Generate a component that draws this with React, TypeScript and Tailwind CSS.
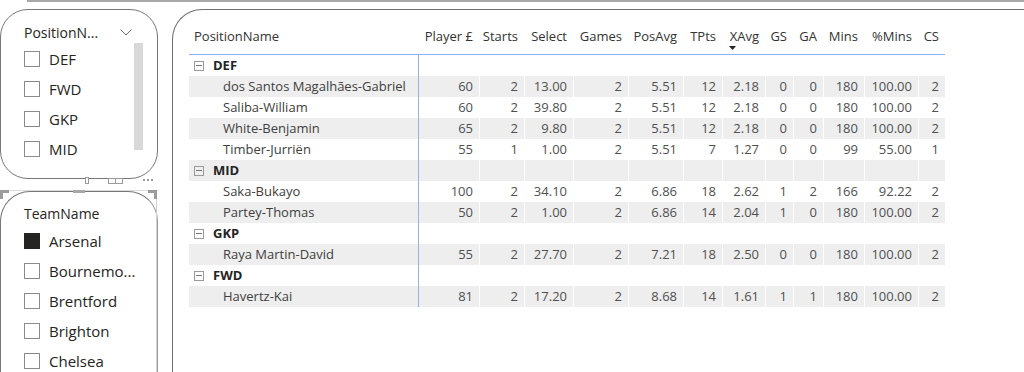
const cols = [
  { name: 'Player £', w: 'w-[60px]' },
  { name: 'Starts', w: 'w-[45px]' },
  { name: 'Select', w: 'w-[49px]' },
  { name: 'Games', w: 'w-[55px]' },
  { name: 'PosAvg', w: 'w-[55px]' },
  { name: 'TPts', w: 'w-[39px]' },
  { name: 'XAvg', w: 'w-[43px]' },
  { name: 'GS', w: 'w-[28px]' },
  { name: 'GA', w: 'w-[30px]' },
  { name: 'Mins', w: 'w-[41px]' },
  { name: '%Mins', w: 'w-[54px]' },
  { name: 'CS', w: 'w-[27px]' },
]

type Row = { group?: string; name?: string; vals?: string[] }

const groups: { pos: string; players: [string, ...string[]][] }[] = [
  {
    pos: 'DEF',
    players: [
      ['dos Santos Magalhães-Gabriel', '60', '2', '13.00', '2', '5.51', '12', '2.18', '0', '0', '180', '100.00', '2'],
      ['Saliba-William', '60', '2', '39.80', '2', '5.51', '12', '2.18', '0', '0', '180', '100.00', '2'],
      ['White-Benjamin', '65', '2', '9.80', '2', '5.51', '12', '2.18', '0', '0', '180', '100.00', '2'],
      ['Timber-Jurriën', '55', '1', '1.00', '2', '5.51', '7', '1.27', '0', '0', '99', '55.00', '1'],
    ],
  },
  {
    pos: 'MID',
    players: [
      ['Saka-Bukayo', '100', '2', '34.10', '2', '6.86', '18', '2.62', '1', '2', '166', '92.22', '2'],
      ['Partey-Thomas', '50', '2', '1.00', '2', '6.86', '14', '2.04', '1', '0', '180', '100.00', '2'],
    ],
  },
  {
    pos: 'GKP',
    players: [['Raya Martin-David', '55', '2', '27.70', '2', '7.21', '18', '2.50', '0', '0', '180', '100.00', '2']],
  },
  {
    pos: 'FWD',
    players: [['Havertz-Kai', '81', '2', '17.20', '2', '8.68', '14', '1.61', '1', '1', '180', '100.00', '2']],
  },
]

const rows: Row[] = groups.flatMap((g) => [
  { group: g.pos },
  ...g.players.map(([name, ...vals]) => ({ name, vals })),
])

function Checkbox({ checked }: { checked?: boolean }) {
  return (
    <span
      className={
        checked
          ? 'w-[16px] h-[16px] shrink-0 bg-[#252423] border border-[#252423]'
          : 'w-[16px] h-[16px] shrink-0 bg-white border border-[#8a8a8a]'
      }
    />
  )
}

function SlicerItem({ label, checked }: { label: string; checked?: boolean }) {
  return (
    <div className="h-[30px] flex items-center gap-[9px] text-[15px] text-[#252423]">
      <Checkbox checked={checked} />
      <span className="whitespace-nowrap">{label}</span>
    </div>
  )
}

export default function App() {
  return (
    <div className="relative w-[1024px] h-[372px] overflow-hidden bg-white font-['Open_Sans',sans-serif]">
      {/* Edge of the visual above */}
      <div className="ml-[27px] h-[2px] bg-[#a8a8a8]" />

      <div className="flex">
        {/* Slicers */}
        <div className="relative w-[158px] shrink-0">
          <div className="mt-[7px] h-[170px] rounded-[28px] border border-[#767676] flex flex-col">
            <div className="mt-[12px] mb-[2px] h-[20px] pl-[23px] pr-[24px] flex items-center justify-between text-[14px] text-[#252423]">
              <span>PositionN...</span>
              <svg width="12" height="7" viewBox="0 0 12 7" className="mr-[1px]">
                <path d="M0.5 0.5 L6 6 L11.5 0.5" fill="none" stroke="#6b6b6b" strokeWidth="1" />
              </svg>
            </div>
            <div className="flex">
              <div className="flex-1 pl-[23px]">
                {['DEF', 'FWD', 'GKP', 'MID'].map((p) => (
                  <SlicerItem key={p} label={p} />
                ))}
              </div>
              <div className="w-[9px] h-[107px] -mt-[1px] mr-[14px] bg-[#d8d8d8]" />
            </div>
          </div>

          {/* visual header icons */}
          <div className="absolute left-[85px] top-[175px] w-[4px] h-[7px] border border-[#9a9a9a] bg-white" />
          <div className="absolute left-[108px] top-[176px] w-[15px] h-[6px] flex border border-[#9a9a9a] bg-white">
            <div className="w-1/2 border-r border-[#9a9a9a]" />
          </div>
          <div className="absolute left-[143px] top-[177px] flex gap-[2px]">
            <span className="w-[2px] h-[2px] bg-[#9a9a9a]" />
            <span className="w-[2px] h-[2px] bg-[#9a9a9a]" />
            <span className="w-[2px] h-[2px] bg-[#9a9a9a]" />
          </div>

          {/* selection frame of the team slicer */}
          <div className="absolute left-0 top-[188px] w-[158px] h-[1px] bg-[#dcdcdc]" />
          <div className="absolute right-[1px] top-[188px] w-[1px] h-[200px] bg-[#d0d0d0]" />
          <div className="absolute left-0 top-[188px] w-[9px] h-[3px] bg-[#9c9c9c]" />
          <div className="absolute left-0 top-[188px] w-[3px] h-[9px] bg-[#9c9c9c]" />
          <div className="absolute left-[73px] top-[188px] w-[12px] h-[3px] bg-[#a8a8a8]" />
          <div className="absolute right-[1px] top-[188px] w-[9px] h-[3px] bg-[#9c9c9c]" />
          <div className="absolute right-[1px] top-[188px] w-[3px] h-[9px] bg-[#9c9c9c]" />

          <div className="mt-[12px] h-[220px] rounded-t-[30px] border border-[#767676] border-r-[#9a9a9a] flex flex-col">
            <div className="mt-[11px] mb-[3px] h-[20px] pl-[23px] flex items-center text-[14px] text-[#252423]">
              TeamName
            </div>
            <div className="pl-[23px]">
              <SlicerItem label="Arsenal" checked />
              <SlicerItem label="Bournemo..." />
              <SlicerItem label="Brentford" />
              <SlicerItem label="Brighton" />
              <SlicerItem label="Chelsea" />
            </div>
          </div>
        </div>

        {/* Matrix visual */}
        <div className="ml-[14px] mt-[7px] flex-1 h-[420px] border-l border-t border-[#6e6e6e] rounded-tl-[30px] pl-[16px] pt-[9px]">
          <div className="w-[756px] text-[13px]">
            <div className="flex h-[36px] border-b border-[#8db3f2] text-[#333333]">
              <div className="w-[230px] pl-[5px] flex items-center">PositionName</div>
              {cols.map((c) => (
                <div key={c.name} className={`${c.w} relative pr-[6px] flex items-center justify-end whitespace-nowrap`}>
                  {c.name}
                  {c.name === 'XAvg' && (
                    <svg width="7" height="4" viewBox="0 0 7 4" className="absolute left-[7px] top-[27px]">
                      <path d="M0 0 L7 0 L3.5 4 Z" fill="#252423" />
                    </svg>
                  )}
                </div>
              ))}
            </div>

            {rows.map((r, i) => (
              <div key={i} className={`flex h-[21px] ${i % 2 === 1 ? 'bg-[#eeeeee]' : 'bg-white'}`}>
                {r.group ? (
                  <div className="w-[230px] border-r border-[#8db3f2] pl-[5px] flex items-center gap-[9px]">
                    <span className="w-[10px] h-[10px] border border-[#9a9a9a] flex items-center justify-center">
                      <span className="w-[6px] h-[1px] bg-[#777777]" />
                    </span>
                    <span className="font-bold text-[#252423]">{r.group}</span>
                  </div>
                ) : (
                  <div className="w-[230px] border-r border-[#8db3f2] pl-[34px] flex items-center text-[#404040] whitespace-nowrap">
                    {r.name}
                  </div>
                )}
                {cols.map((c, j) => (
                  <div
                    key={c.name}
                    className={`${c.w} pr-[6px] flex items-center justify-end text-[#505050] ${j > 0 ? 'border-l border-white' : ''}`}
                  >
                    {r.vals ? r.vals[j] : ''}
                  </div>
                ))}
              </div>
            ))}
          </div>
        </div>
      </div>
    </div>
  )
}
